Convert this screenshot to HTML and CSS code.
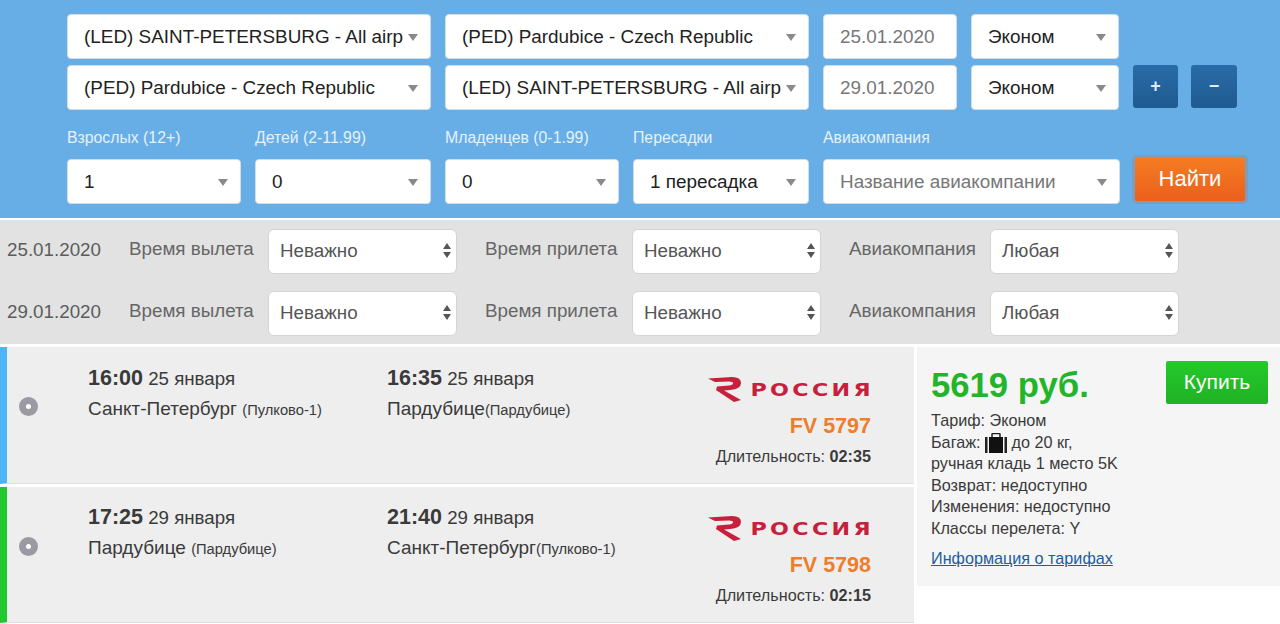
FILE: index.html
```html
<!DOCTYPE html>
<html lang="ru">

<head>
    <meta charset="UTF-8">
    <meta name="viewport" content="width=device-width, initial-scale=1.0">
    <title>Поиск авиабилетов</title>
    <link rel="stylesheet" href="styles.css">
</head>

<body>
    <form class="search">
        <div class="search-row">
            <div class="field w-city"><span class="field-text">(LED) SAINT-PETERSBURG - All airports</span></div>
            <div class="field w-city"><span class="field-text">(PED) Pardubice - Czech Republic</span></div>
            <div class="field w-date no-caret muted"><span class="field-text">25.01.2020</span></div>
            <div class="field w-class"><span class="field-text">Эконом</span></div>
        </div>
        <div class="search-row row-second">
            <div class="field w-city"><span class="field-text">(PED) Pardubice - Czech Republic</span></div>
            <div class="field w-city"><span class="field-text">(LED) SAINT-PETERSBURG - All airports</span></div>
            <div class="field w-date no-caret muted"><span class="field-text">29.01.2020</span></div>
            <div class="field w-class"><span class="field-text">Эконом</span></div>
            <button type="button" class="btn-small btn-plus">+</button>
            <button type="button" class="btn-small btn-minus">−</button>
        </div>
        <div class="search-row row-options">
            <label class="option w-adults">
                <span class="option-label">Взрослых (12+)</span>
                <div class="field"><span class="field-text">1</span></div>
            </label>
            <label class="option w-kids">
                <span class="option-label">Детей (2-11.99)</span>
                <div class="field"><span class="field-text">0</span></div>
            </label>
            <label class="option w-adults">
                <span class="option-label">Младенцев (0-1.99)</span>
                <div class="field"><span class="field-text">0</span></div>
            </label>
            <label class="option w-kids">
                <span class="option-label">Пересадки</span>
                <div class="field"><span class="field-text">1 пересадка</span></div>
            </label>
            <label class="option w-airline">
                <span class="option-label">Авиакомпания</span>
                <div class="field muted"><span class="field-text">Название авиакомпании</span></div>
            </label>
            <button type="button" class="btn-find">Найти</button>
        </div>
    </form>

    <div class="filters">
        <div class="filter-row">
            <span class="filter-date">25.01.2020</span>
            <span class="filter-label w-l1">Время вылета</span>
            <div class="filter-select"><span>Неважно</span></div>
            <span class="filter-label w-l2">Время прилета</span>
            <div class="filter-select"><span>Неважно</span></div>
            <span class="filter-label w-l3">Авиакомпания</span>
            <div class="filter-select"><span>Любая</span></div>
        </div>
        <div class="filter-row">
            <span class="filter-date">29.01.2020</span>
            <span class="filter-label w-l1">Время вылета</span>
            <div class="filter-select"><span>Неважно</span></div>
            <span class="filter-label w-l2">Время прилета</span>
            <div class="filter-select"><span>Неважно</span></div>
            <span class="filter-label w-l3">Авиакомпания</span>
            <div class="filter-select"><span>Любая</span></div>
        </div>
    </div>

    <div class="result">
        <div class="flights">
            <div class="flight flight-out">
                <span class="radio"></span>
                <div class="point">
                    <div class="point-time"><b>16:00</b> 25 января</div>
                    <div class="point-city">Санкт-Петербург <small>(Пулково-1)</small></div>
                </div>
                <div class="point">
                    <div class="point-time"><b>16:35</b> 25 января</div>
                    <div class="point-city">Пардубице<small>(Пардубице)</small></div>
                </div>
                <div class="carrier">
                    <div class="logo">
                        <svg class="logo-mark" width="34" height="26" viewBox="0 0 34 26">
                            <path d="M0 2.500 L24 1 Q33 1 33 7 Q33 13 22 14 L16 14.500 L33 24 L26 26 L8 14 L9 10.500 L21 9.500 Q25 9 25 7 Q25 5.500 21 5.500 L7 6 Z" fill="#c8203c"/>
                        </svg>
                        <span class="logo-name">РОССИЯ</span>
                    </div>
                    <div class="flight-no">FV 5797</div>
                    <div class="duration">Длительность: <b>02:35</b></div>
                </div>
            </div>
            <div class="flight flight-back">
                <span class="radio"></span>
                <div class="point">
                    <div class="point-time"><b>17:25</b> 29 января</div>
                    <div class="point-city">Пардубице <small>(Пардубице)</small></div>
                </div>
                <div class="point">
                    <div class="point-time"><b>21:40</b> 29 января</div>
                    <div class="point-city">Санкт-Петербург<small>(Пулково-1)</small></div>
                </div>
                <div class="carrier">
                    <div class="logo">
                        <svg class="logo-mark" width="34" height="26" viewBox="0 0 34 26">
                            <path d="M0 2.500 L24 1 Q33 1 33 7 Q33 13 22 14 L16 14.500 L33 24 L26 26 L8 14 L9 10.500 L21 9.500 Q25 9 25 7 Q25 5.500 21 5.500 L7 6 Z" fill="#c8203c"/>
                        </svg>
                        <span class="logo-name">РОССИЯ</span>
                    </div>
                    <div class="flight-no">FV 5798</div>
                    <div class="duration">Длительность: <b>02:15</b></div>
                </div>
            </div>
        </div>

        <div class="price-box">
            <div class="price-top">
                <div class="price">5619 руб.</div>
                <button type="button" class="btn-buy">Купить</button>
            </div>
            <ul class="tariff">
                <li>Тариф: Эконом</li>
                <li>Багаж:
                    <svg class="bag" width="22" height="20" viewBox="0 0 22 20">
                        <path d="M7 4 V1.500 Q7 0.500 8 0.500 H14 Q15 0.500 15 1.500 V4" fill="none" stroke="#222" stroke-width="1.500"/>
                        <rect x="0" y="4" width="2.500" height="16" fill="#222"/>
                        <rect x="4" y="4" width="14" height="16" fill="#111"/>
                        <rect x="19.500" y="4" width="2.500" height="16" fill="#222"/>
                    </svg>
                    до 20 кг,</li>
                <li>ручная кладь 1 место 5K</li>
                <li>Возврат: недоступно</li>
                <li>Изменения: недоступно</li>
                <li>Классы перелета: Y</li>
            </ul>
            <a href="#" class="tariff-link">Информация о тарифах</a>
        </div>
    </div>
</body>

</html>
```

FILE: styles.css
```css
* {
    box-sizing: border-box;
}

body {
    margin: 0;
    height: 624px;
    overflow: hidden;
    background-color: #fff;
    font-family: "Liberation Sans", Arial, sans-serif;
    color: #3a3a3a;
}

/* search form */
.search {
    height: 218px;
    padding: 14px 0 0 67px;
    background-color: #67aee7;
}

.search-row {
    display: flex;
    gap: 14px;
}

.row-second {
    margin-top: 6px;
}

.row-options {
    margin-top: 16px;
}

.field {
    position: relative;
    height: 45px;
    padding: 0 27px 0 16px;
    display: flex;
    align-items: center;
    background-color: #fff;
    border: 1px solid #d5dde4;
    border-radius: 4px;
    font-size: 18.900px;
    color: #222;
    overflow: hidden;
}

.field::after {
    content: "";
    position: absolute;
    right: 12px;
    top: 19px;
    border-left: 5px solid transparent;
    border-right: 5px solid transparent;
    border-top: 7px solid #8a8a8a;
}

.no-caret {
    padding-right: 8px;
}

.no-caret::after {
    display: none;
}

.muted {
    color: #777;
}

.field-text {
    white-space: nowrap;
    overflow: hidden;
}

.w-city {
    width: 364px;
}

.w-date {
    width: 134px;
}

.w-class {
    width: 148px;
}

.option {
    display: block;
}

.option-label {
    display: block;
    height: 33px;
    padding-top: 3px;
    font-size: 15.800px;
    color: #e6f1fb;
    white-space: nowrap;
}

.w-adults {
    width: 174px;
}

.w-kids {
    width: 176px;
}

.w-airline {
    width: 297px;
}

.btn-small {
    width: 45px;
    height: 43px;
    border: 0;
    border-radius: 3px;
    background: linear-gradient(#2a6ca8, #1f5a90);
    color: #dfeaf4;
    font-family: inherit;
    font-size: 18px;
    font-weight: bold;
}

.btn-minus {
    width: 46px;
    margin-left: -1px;
}

.btn-find {
    width: 110px;
    height: 43px;
    margin-top: 32px;
    margin-left: 1px;
    padding-bottom: 3px;
    border: 0;
    border-radius: 2px;
    background: linear-gradient(#f47c22, #ec5f1c);
    box-shadow: 0 0 0 3px #7c9dbd;
    color: #fff;
    font-family: inherit;
    font-size: 22px;
}

/* filters */
.filters {
    height: 124px;
    margin-top: 2px;
    padding-top: 9px;
    background-color: #e2e2e2;
}

.filter-row {
    display: flex;
    align-items: center;
    height: 45px;
    padding-left: 7px;
    margin-bottom: 17px;
    font-size: 18.800px;
    color: #666;
}

.filter-date {
    width: 122px;
    padding-bottom: 3px;
    color: #5c5c5c;
}

.filter-label {
    padding-bottom: 6px;
    white-space: nowrap;
}

.w-l1 {
    width: 139px;
}

.w-l2 {
    width: 147px;
    margin-left: 28px;
}

.w-l3 {
    width: 141px;
    margin-left: 28px;
}

.filter-select {
    position: relative;
    width: 189px;
    height: 45px;
    padding: 0 11px 2px;
    display: flex;
    align-items: center;
    background-color: #fff;
    border: 1px solid #d4d4d4;
    border-radius: 6px;
    color: #555;
}

.filter-select::before,
.filter-select::after {
    content: "";
    position: absolute;
    right: 5px;
    border-left: 4.500px solid transparent;
    border-right: 4.500px solid transparent;
}

.filter-select::before {
    top: 13px;
    border-bottom: 6px solid #555;
}

.filter-select::after {
    top: 22px;
    border-top: 6px solid #555;
}

/* results */
.result {
    display: flex;
    margin-top: 3px;
}

.flights {
    width: 914px;
}

.flight {
    display: flex;
    height: 137px;
    padding: 20px 43px 0 0;
    margin-bottom: 3px;
    position: relative;
    background-color: #eee;
    border-left: 7px solid #4db5f6;
    border-bottom: 1px solid #ddd;
}

.flight-back {
    height: 136px;
    padding-top: 19px;
    border-left-color: #22c92e;
}

.radio {
    position: absolute;
    left: 12px;
    top: 50px;
    width: 19px;
    height: 19px;
    border: 7px solid #9b9aa2;
    border-radius: 50%;
    background-color: #fff;
}

.point {
    width: 299px;
    font-size: 18.700px;
}

.point:first-of-type {
    margin-left: 81px;
}

.point-time {
    line-height: 22px;
}

.point-time b {
    font-size: 21.500px;
}

.point-city {
    margin-top: 8px;
    line-height: 22px;
    font-size: 19px;
}

.point-city small {
    font-size: 14.700px;
}

.carrier {
    flex: 1;
    text-align: right;
}

.logo {
    display: flex;
    justify-content: flex-end;
    align-items: center;
    gap: 6px;
    height: 26px;
    margin-top: 9px;
}

.logo-name {
    margin-right: -3px;
    font-family: "DejaVu Sans", sans-serif;
    font-size: 18.500px;
    font-weight: bold;
    letter-spacing: 2.800px;
    color: #c8203c;
    transform: scaleX(1.200);
    transform-origin: right center;
}

.logo-mark {
    margin-right: 23px;
}

.flight-no {
    margin-top: 12px;
    font-size: 21.500px;
    font-weight: bold;
    color: #ef7d2a;
}

.duration {
    margin-top: 8px;
    font-size: 16.200px;
}

.price-box {
    width: 363px;
    height: 239px;
    margin-left: 3px;
    padding: 14px 12px 0 14px;
    background-color: #f5f5f5;
}

.price-top {
    display: flex;
    justify-content: space-between;
}

.price {
    font-size: 34.700px;
    font-weight: bold;
    color: #22b52a;
    padding-top: 5px;
}

.btn-buy {
    width: 102px;
    height: 43px;
    padding-bottom: 3px;
    border: 0;
    border-radius: 2px;
    background: linear-gradient(#25c92a, #1fb225);
    color: #fff;
    font-family: inherit;
    font-size: 21px;
}

.tariff {
    list-style: none;
    margin: 5px 0 0;
    padding: 0;
    font-size: 16.200px;
    line-height: 21.600px;
}

.bag {
    vertical-align: -5px;
}

.tariff-link {
    display: block;
    margin-top: 9px;
    font-size: 16.200px;
    color: #1b5d9f;
}
```
